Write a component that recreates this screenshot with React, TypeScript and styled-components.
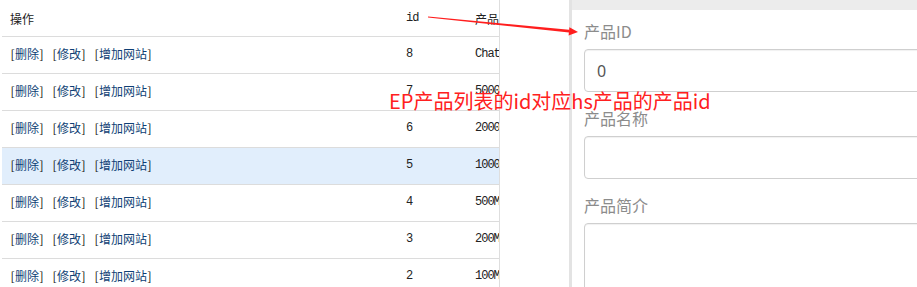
import React from "react";
import styled, { createGlobalStyle } from "styled-components";

const Global = createGlobalStyle`
  html, body { margin: 0; padding: 0; background: #fff; overflow: hidden; }
  * { box-sizing: border-box; }
`;

const Page = styled.div`
  position: relative;
  display: flex;
  width: 917px;
  height: 287px;
  overflow: hidden;
  background: #fff;
`;

const TableArea = styled.div`
  width: 500px;
  flex: none;
  padding-left: 2px;
  border-right: 1px solid #dedede;
  overflow: hidden;
`;

const Row = styled.div<{ $active?: boolean; $head?: boolean }>`
  display: grid;
  grid-template-columns: 396px 69px 1fr;
  height: 37px;
  border-bottom: 1px solid #dcdcdc;
  background: ${(p) => (p.$active ? "#e1eefc" : "transparent")};
  padding-bottom: ${(p) => (p.$head ? "0" : "3px")};
`;

const Cell = styled.div<{ $mono?: boolean }>`
  display: flex;
  align-items: center;
  padding-left: 8px;
  overflow: hidden;
  white-space: nowrap;
  font-family: ${(p) =>
    p.$mono
      ? '"Liberation Mono", "Noto Sans CJK SC", monospace'
      : '"Noto Sans CJK SC", "Noto Sans", sans-serif'};
  font-size: 12px;
  letter-spacing: ${(p) => (p.$mono ? "-1px" : "0")};
  color: #222;
`;

const Actions = styled.div`
  display: flex;
  gap: 8px;
`;

const Action = styled.span`
  display: inline-flex;
  align-items: center;
  color: #1a1a1a;
  font-family: "Noto Sans CJK SC", sans-serif;
  font-size: 12px;
`;

const Bracket = styled.span`
  display: inline-block;
  width: 5px;
  text-align: center;
  color: #111;
`;

const ActionLink = styled.a`
  color: #0f3f75;
  text-decoration: none;
`;

const Strip = styled.div`
  width: 69px;
  flex: none;
  background: #fff;
`;

const Panel = styled.div`
  flex: 1;
  border-left: 3px solid #e3e3e3;
  display: flex;
  flex-direction: column;
  overflow: hidden;
`;

const TopBar = styled.div`
  height: 10px;
  background: #ececec;
  flex: none;
`;

const Form = styled.div`
  padding-left: 12px;
  display: flex;
  flex-direction: column;
`;

const Label = styled.div<{ $top: number }>`
  margin-top: ${(p) => p.$top}px;
  height: 22px;
  line-height: 22px;
  font-family: "Noto Sans CJK SC", "Noto Sans", sans-serif;
  font-size: 16px;
  color: #8c8c8c;
`;

const Field = styled.div<{ $gap: number; $h: number }>`
  margin-top: ${(p) => p.$gap}px;
  width: 420px;
  height: ${(p) => p.$h}px;
  border: 1px solid #cfcfcf;
  border-radius: 4px;
  box-shadow: inset 0 1px 1px rgba(0, 0, 0, 0.06);
  padding-left: 12px;
  display: flex;
  align-items: center;
  font-family: "Noto Sans", "Noto Sans CJK SC", sans-serif;
  font-size: 16px;
  color: #555;
  flex: none;
`;

const Note = styled.div`
  position: absolute;
  left: 389px;
  top: 88px;
  font-family: "Noto Sans CJK SC", "Noto Sans", sans-serif;
  font-size: 20px;
  line-height: 26px;
  color: #ff2020;
  white-space: nowrap;
  pointer-events: none;
`;

const Overlay = styled.svg`
  position: absolute;
  left: 0;
  top: 0;
  pointer-events: none;
`;

const rows = [
  { id: "8", name: "ChatGPT" },
  { id: "7", name: "5000M" },
  { id: "6", name: "2000M" },
  { id: "5", name: "1000M", active: true },
  { id: "4", name: "500M" },
  { id: "3", name: "200M" },
  { id: "2", name: "100M" },
];

const ActionGroup = ({ label }: { label: string }) => (
  <Action>
    <Bracket>[</Bracket>
    <ActionLink href="#">{label}</ActionLink>
    <Bracket>]</Bracket>
  </Action>
);

export default function App() {
  return (
    <>
      <Global />
      <Page>
        <TableArea>
          <Row $head>
            <Cell>操作</Cell>
            <Cell $mono>id</Cell>
            <Cell>产品</Cell>
          </Row>
          {rows.map((r) => (
            <Row key={r.id} $active={r.active}>
              <Cell>
                <Actions>
                  <ActionGroup label="删除" />
                  <ActionGroup label="修改" />
                  <ActionGroup label="增加网站" />
                </Actions>
              </Cell>
              <Cell $mono>{r.id}</Cell>
              <Cell $mono>{r.name}</Cell>
            </Row>
          ))}
        </TableArea>
        <Strip />
        <Panel>
          <TopBar />
          <Form>
            <Label $top={10}>产品ID</Label>
            <Field $gap={7} $h={43}>0</Field>
            <Label $top={15}>产品名称</Label>
            <Field $gap={7} $h={43} />
            <Label $top={15}>产品简介</Label>
            <Field $gap={7} $h={90} />
          </Form>
        </Panel>
        <Note>EP产品列表的id对应hs产品的产品id</Note>
        <Overlay width={917} height={287} viewBox="0 0 917 287">
          <polygon
            points="428,16.6 428,17.4 569,32.6 569,29.8"
            fill="#ff1e1e"
          />
          <polygon points="569.4,27.2 578,32 568.6,35.4" fill="#ff1e1e" />
        </Overlay>
      </Page>
    </>
  );
}
